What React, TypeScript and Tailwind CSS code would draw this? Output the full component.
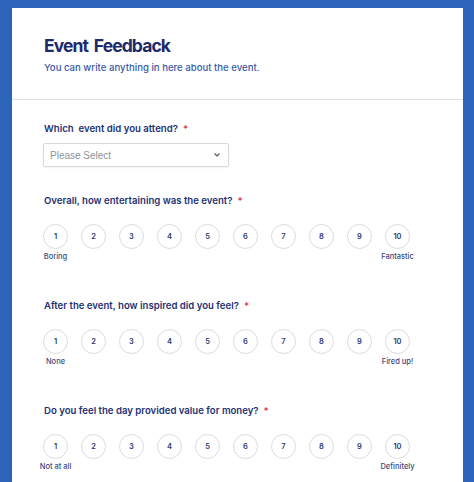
import React from "react";

const Rating = ({ q, low, high }: { q: string; low: string; high: string }) => (
  <div className="flex flex-col">
    <div className="pl-[1px] text-[9.6px] leading-[14px] font-semibold text-[#233274]">
      {q}
      <span className="ml-[5px] text-[#e0323a]">*</span>
    </div>
    <div className="mt-[16px] flex gap-[13px]">
      {Array.from({ length: 10 }, (_, i) => (
        <div key={i} className="flex w-[25px] flex-col items-center">
          <div className="flex h-[25px] w-[25px] items-center justify-center rounded-full border border-[#d9dce1] text-[7.5px] font-semibold text-[#2b3a74]">
            {i + 1}
          </div>
          <div className="mt-[3px] h-[10px] whitespace-nowrap text-[7.5px] leading-[10px] font-medium text-[#3b4a7e]">
            {i === 0 ? low : i === 9 ? high : ""}
          </div>
        </div>
      ))}
    </div>
  </div>
);

export default function App() {
  return (
    <div
      className="min-h-screen bg-[#2b64b9] pt-[8px] pl-[12px] pr-[11px]"
      style={{ fontFamily: "Inter, 'Noto Sans', sans-serif" }}
    >
      <div className="min-h-[474px] bg-white">
        <div className="px-[32px] pt-[26px] pb-[24px]">
          <h1 className="text-[17.5px] leading-[24px] font-bold tracking-[-0.9px] [word-spacing:2.5px] text-[#1d2a6c]">
            Event Feedback
          </h1>
          <p className="mt-[3px] text-[9.6px] leading-[14px] font-medium text-[#3a5ba6]">
            You can write anything in here about the event.
          </p>
        </div>
        <div className="h-px bg-[#dcdfe3]" />
        <div className="pl-[31px] pt-[22px] pb-4">
          <div className="pl-[1px] text-[9.6px] leading-[14px] font-semibold text-[#233274]">
            Which&nbsp; event did you attend?
            <span className="ml-[5px] text-[#e0323a]">*</span>
          </div>
          <div
            className="mt-[7px] flex h-[24px] w-[186px] items-center justify-between rounded-[2px] border border-[#d6d9de] pl-[6px] pr-[6px] shadow-[0_1px_2px_rgba(0,0,0,0.06)]"
            style={{ fontFamily: "'Liberation Sans', Arial, sans-serif" }}
          >
            <span className="text-[10px] text-[#8d929b]">Please Select</span>
            <svg width="8" height="6" viewBox="0 0 8 6" className="mr-[1px]">
              <path d="M1.5 1.5 L4 4 L6.5 1.5" fill="none" stroke="#555b66" strokeWidth="1.2" />
            </svg>
          </div>
          <div className="mt-[27px] flex flex-col gap-[37px]">
            <Rating q="Overall, how entertaining was the event?" low="Boring" high="Fantastic" />
            <Rating q="After the event, how inspired did you feel?" low="None" high="Fired up!" />
            <Rating q="Do you feel the day provided value for money?" low="Not at all" high="Definitely" />
          </div>
        </div>
      </div>
    </div>
  );
}
